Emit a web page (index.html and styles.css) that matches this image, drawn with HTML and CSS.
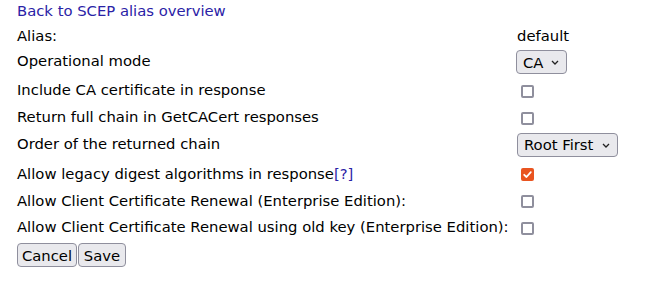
FILE: index.html
```html
<!DOCTYPE html>
<html>
<head>
<meta charset="utf-8">
<link rel="stylesheet" href="styles.css">
</head>
<body>
<div class="page">
  <div class="back"><a href="#" class="link">Back to SCEP alias overview</a></div>
  <table class="form">
    <tr class="r1"><td class="lbl">Alias:</td><td class="val">default</td></tr>
    <tr class="r2"><td class="lbl up">Operational mode</td><td class="val">
      <span class="sel sel-ca"><select><option>CA</option></select><svg class="chev" width="8" height="5" viewBox="0 0 8 5"><path d="M1 1 L4 4 L7 1" fill="none" stroke="#222" stroke-width="1.3"/></svg></span>
    </td></tr>
    <tr class="r3"><td class="lbl">Include CA certificate in response</td><td class="val"><span class="cb"></span></td></tr>
    <tr class="r4"><td class="lbl">Return full chain in GetCACert responses</td><td class="val"><span class="cb"></span></td></tr>
    <tr class="r5"><td class="lbl up">Order of the returned chain</td><td class="val">
      <span class="sel sel-root"><select><option>Root First</option></select><svg class="chev" width="8" height="5" viewBox="0 0 8 5"><path d="M1 1 L4 4 L7 1" fill="none" stroke="#222" stroke-width="1.3"/></svg></span>
    </td></tr>
    <tr class="r6"><td class="lbl">Allow legacy digest algorithms in response<a href="#" class="link">[?]</a></td><td class="val"><span class="cb checked"><svg width="13" height="13" viewBox="0 0 13 13"><path d="M3.2 6.8 L5.5 9 L9.8 4.2" fill="none" stroke="#fff" stroke-width="1.8" stroke-linecap="round" stroke-linejoin="round"/></svg></span></td></tr>
    <tr class="r7"><td class="lbl">Allow Client Certificate Renewal (Enterprise Edition):</td><td class="val"><span class="cb"></span></td></tr>
    <tr class="r8"><td class="lbl">Allow Client Certificate Renewal using old key (Enterprise Edition):</td><td class="val"><span class="cb"></span></td></tr>
  </table>
  <div class="buttons"><button class="btn btn-cancel">Cancel</button><button class="btn btn-save">Save</button></div>
</div>
</body>
</html>
```
FILE: styles.css
```css
html, body {
  margin: 0;
  padding: 0;
  background: #fff;
}
body {
  font-family: "DejaVu Sans", Verdana, sans-serif;
  font-size: 14.8px;
  color: #000;
}
.page {
  padding: 2px 0 0 17px;
}
.back {
  height: 20px;
  line-height: 17px;
}
.link {
  color: #2a22a6;
  text-decoration: none;
}
.form {
  border-collapse: collapse;
  border-spacing: 0;
}
.form td {
  padding: 0;
  vertical-align: middle;
  white-space: nowrap;
  line-height: 17px;
}
.form td.up {
  padding-bottom: 3px;
}
.lbl {
  width: 500px;
}
.r1 { height: 26px; }
.r2 { height: 28px; }
.r3 { height: 27px; }
.r4 { height: 27px; }
.r5 { height: 29px; }
.r6 { height: 28px; }
.r7 { height: 26px; }
.r8 { height: 27px; }
.sel {
  position: relative;
  display: inline-block;
  vertical-align: middle;
}
.sel select {
  -webkit-appearance: none;
  appearance: none;
  display: block;
  height: 24px;
  margin: 0;
  padding: 0 0 0 6px;
  font-family: "DejaVu Sans", Verdana, sans-serif;
  font-size: 14.8px;
  color: #000;
  background: #e9e9ed;
  border: 1px solid #8f8f9d;
  border-radius: 4px;
  outline: none;
}
.sel-ca { margin-left: -1px; }
.sel-ca select { width: 51px; }
.sel-root select { width: 101px; }
.chev {
  position: absolute;
  right: 8px;
  top: 10px;
  pointer-events: none;
}
.cb {
  display: inline-block;
  vertical-align: middle;
  box-sizing: border-box;
  width: 13px;
  height: 13px;
  margin-left: 4px;
  border: 2px solid #8f8f9d;
  border-radius: 2px;
  background: #fff;
  position: relative;
}
.cb.checked {
  background: #e95420;
  border-color: #e95420;
}
.cb.checked svg {
  position: absolute;
  left: -2px;
  top: -2px;
}
.buttons {
  display: flex;
  gap: 1px;
  margin-top: 3px;
}
.btn {
  height: 24px;
  margin: 0;
  padding: 0;
  font-family: "DejaVu Sans", Verdana, sans-serif;
  font-size: 14.8px;
  color: #000;
  background: #e9e9ed;
  border: 1px solid #8f8f9d;
  border-radius: 4px;
  text-align: center;
}
.btn-cancel { width: 60px; }
.btn-save { width: 48px; }
```
